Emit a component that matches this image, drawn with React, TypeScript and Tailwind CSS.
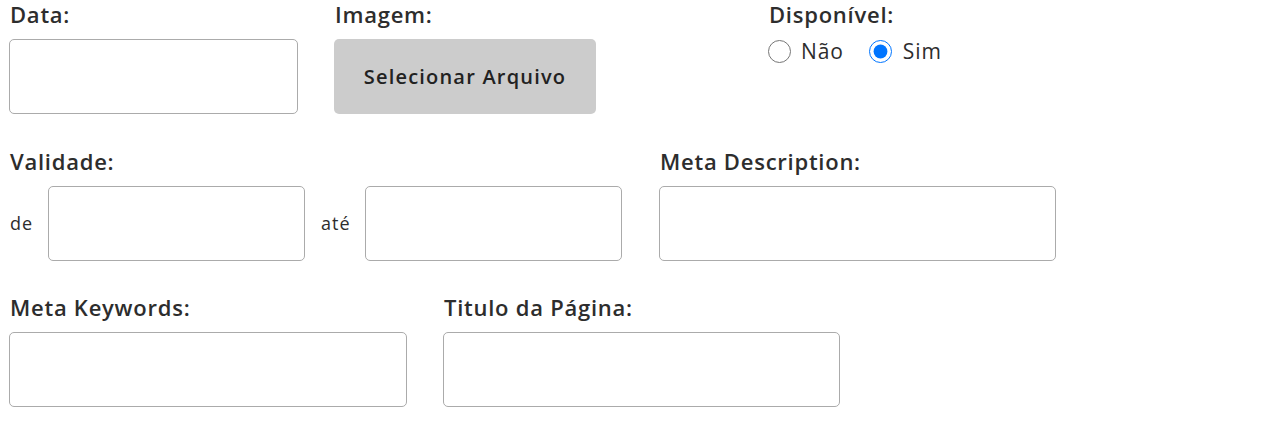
import React from "react";

const font = { fontFamily: '"Open Sans", "Liberation Sans", sans-serif' };

function Label({ children }: { children: React.ReactNode }) {
  return (
    <div className="h-[30px] mb-[9px] pl-[1px] pb-[3px] flex items-center text-[22px] tracking-[0.75px] font-semibold text-[#2d2d2d] leading-none whitespace-nowrap">
      {children}
    </div>
  );
}

function Box({ w }: { w: string }) {
  return <input type="text" className={`${w} h-[75px] border border-[#ababab] rounded-[5px] bg-white outline-none`} />;
}

export default function App() {
  return (
    <div className="bg-white min-h-[436px] w-[1277px] pl-[9px] pt-0" style={font}>
      {/* Row 1 */}
      <div className="flex items-start">
        <div className="w-[289px]">
          <Label>Data:</Label>
          <input type="text" className="w-[289px] h-[75px] border border-[#ababab] rounded-[5px] bg-white outline-none" />
        </div>
        <div className="ml-[36px] w-[262px]">
          <Label>Imagem:</Label>
          <button className="w-[262px] h-[75px] rounded-[5px] bg-[#cccccc] text-[20px] tracking-[1.2px] font-semibold text-[#222222]">
            Selecionar Arquivo
          </button>
        </div>
        <div className="ml-[172px]">
          <Label>Disponível:</Label>
          <div className="flex items-center -mt-[3px] text-[21px] tracking-[0.9px] text-[#2d2d2d]">
            <label className="flex items-center">
              <input type="radio" name="disp" className="w-[23px] h-[23px] m-0" />
              <span className="ml-[10px]">Não</span>
            </label>
            <label className="flex items-center ml-[25px]">
              <input type="radio" name="disp" defaultChecked className="w-[23px] h-[23px] m-0" />
              <span className="ml-[11px]">Sim</span>
            </label>
          </div>
        </div>
      </div>

      {/* Row 2 */}
      <div className="flex items-start mt-[33px]">
        <div>
          <Label>Validade:</Label>
          <div className="flex items-center text-[18px] tracking-[1px] text-[#2d2d2d]">
            <span className="pl-[1px] w-[39px]">de</span>
            <Box w="w-[257px]" />
            <span className="ml-[16px] w-[44px]">até</span>
            <Box w="w-[257px]" />
          </div>
        </div>
        <div className="ml-[37px]">
          <Label>Meta Description:</Label>
          <Box w="w-[397px]" />
        </div>
      </div>

      {/* Row 3 */}
      <div className="flex items-start mt-[32px]">
        <div>
          <Label>Meta Keywords:</Label>
          <Box w="w-[398px]" />
        </div>
        <div className="ml-[36px]">
          <Label>Titulo da Página:</Label>
          <Box w="w-[397px]" />
        </div>
      </div>
    </div>
  );
}
